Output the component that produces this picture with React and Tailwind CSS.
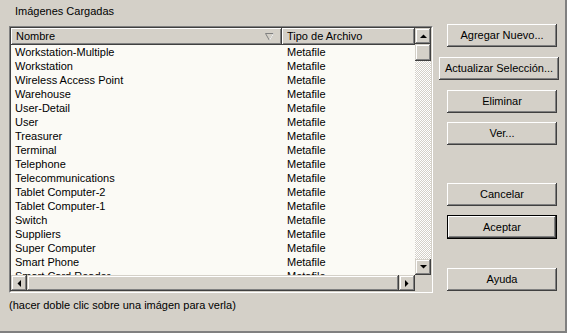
import React from "react";

const rows = [
  "Workstation-Multiple",
  "Workstation",
  "Wireless Access Point",
  "Warehouse",
  "User-Detail",
  "User",
  "Treasurer",
  "Terminal",
  "Telephone",
  "Telecommunications",
  "Tablet Computer-2",
  "Tablet Computer-1",
  "Switch",
  "Suppliers",
  "Super Computer",
  "Smart Phone",
  "Smart Card Reader",
];

const raised =
  "bg-[#d4d0c8] shadow-[inset_-1px_-1px_#404040,inset_1px_1px_#ffffff,inset_-2px_-2px_#808080]";
const raisedBtn =
  "bg-[#d4d0c8] shadow-[inset_-1px_-1px_#404040,inset_1px_1px_#d4d0c8,inset_-2px_-2px_#808080,inset_2px_2px_#ffffff]";

function Btn({ children, wide, def, className = "" }) {
  return (
    <div className={`${className} ${wide ? "ml-0 w-[120px]" : "ml-[8px] w-[110px]"} ${def ? "border border-black h-[24px]" : "h-[23px]"}`}>
      <div className={`${raised} h-full flex items-center justify-center text-black`}>
        {children}
      </div>
    </div>
  );
}

function Arrow({ dir }) {
  const pts = {
    up: "0,4 7,4 3.5,0.5",
    down: "0,0 7,0 3.5,3.5",
    left: "4,0 4,7 0.5,3.5",
    right: "0,0 0,7 3.5,3.5",
  }[dir];
  const w = dir === "up" || dir === "down" ? 7 : 4;
  const h = dir === "up" || dir === "down" ? 4 : 7;
  return (
    <svg width={w} height={h} viewBox={`0 0 ${w} ${h}`}>
      <polygon points={pts} fill="#000" />
    </svg>
  );
}

export default function App() {
  return (
    <div
      className="w-[567px] h-[333px] bg-[#d4d0c8] flex border-r-2 border-b-2 border-r-[#808080] border-b-[#808080] text-[11px] text-black"
      style={{ fontFamily: '"Liberation Sans", Arial, sans-serif' }}
    >
      {/* Left column */}
      <div className="ml-[9px] w-[424px] flex flex-col">
        <div className="pt-[4px] pl-[6px] leading-[14px] h-[18px]">Imágenes Cargadas</div>
        <div className="mt-[8px] w-[424px] h-[267px] border border-t-[#808080] border-l-[#808080] border-b-white border-r-white">
          <div className="w-full h-full border border-t-[#404040] border-l-[#404040] border-b-[#d4d0c8] border-r-[#d4d0c8] flex flex-col bg-[#fbfaf5]">
            <div className="flex flex-1 min-h-0">
              {/* list area */}
              <div className="flex-1 flex flex-col min-w-0 overflow-hidden">
                <div className="flex h-[17px] shrink-0">
                  <div className={`${raised} w-[271px] h-full flex items-center pl-[5px] pr-[8px] justify-between`}>
                    <span>Nombre</span>
                    <svg width="9" height="8" viewBox="0 0 9 8">
                      <polygon points="0.5,0.5 8.5,0.5 4.5,7.5" fill="none" stroke="#808080" strokeWidth="1" />
                      <line x1="4.5" y1="7.5" x2="8.5" y2="0.5" stroke="#ffffff" strokeWidth="1" />
                    </svg>
                  </div>
                  <div className={`${raised} flex-1 h-full flex items-center pl-[5px]`}>Tipo de Archivo</div>
                </div>
                <div className="flex-1 overflow-hidden">
                  {rows.map((r) => (
                    <div key={r} className="flex h-[14px] leading-[14px]">
                      <div className="w-[271px] pl-[4px] whitespace-nowrap">{r}</div>
                      <div className="pl-[5px]">Metafile</div>
                    </div>
                  ))}
                </div>
              </div>
              {/* vertical scrollbar */}
              <div className="w-[16px] flex flex-col bg-[repeating-conic-gradient(#ffffff_0%_25%,#d4d0c8_0%_50%)] bg-[length:2px_2px]">
                <div className={`${raisedBtn} h-[16px] flex items-center justify-center`}>
                  <Arrow dir="up" />
                </div>
                <div className={`${raisedBtn} h-[17px]`} />
                <div className="flex-1" />
                <div className={`${raisedBtn} h-[16px] flex items-center justify-center`}>
                  <Arrow dir="down" />
                </div>
              </div>
            </div>
            {/* horizontal scrollbar */}
            <div className="h-[16px] flex shrink-0 bg-[#d4d0c8]">
              <div className={`${raisedBtn} w-[16px] h-full flex items-center justify-center`}>
                <Arrow dir="left" />
              </div>
              <div className={`${raisedBtn} flex-1 h-full`} />
              <div className={`${raisedBtn} w-[16px] h-full flex items-center justify-center`}>
                <Arrow dir="right" />
              </div>
              <div className="w-[16px] h-full bg-[#d4d0c8]" />
            </div>
          </div>
        </div>
        <div className="mt-[5px] leading-[14px]">(hacer doble clic sobre una imágen para verla)</div>
      </div>

      {/* Right column */}
      <div className="ml-[6px] w-[120px] flex flex-col">
        <Btn className="mt-[24px]">Agregar Nuevo...</Btn>
        <Btn className="mt-[10px]" wide>Actualizar Selección...</Btn>
        <Btn className="mt-[10px]">Eliminar</Btn>
        <Btn className="mt-[9px]">Ver...</Btn>
        <Btn className="mt-[38px]">Cancelar</Btn>
        <Btn className="mt-[9px]" def>Aceptar</Btn>
        <Btn className="mt-[29px]">Ayuda</Btn>
      </div>
    </div>
  );
}
